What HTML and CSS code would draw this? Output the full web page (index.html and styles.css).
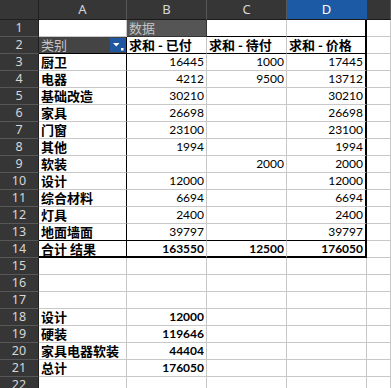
FILE: index.html
```html
<!doctype html>
<html lang="zh">
<head>
	<meta charset="UTF-8">
	<title>数据透视表</title>
	<link rel="stylesheet" href="styles.css">
</head>
<body>
	<div class="sheet">
		<!-- column headers -->
		<div class="corner"></div>
		<div class="ch">A</div>
		<div class="ch">B</div>
		<div class="ch">C</div>
		<div class="ch active">D</div>
		<div class="ch last"></div>

		<!-- 1 -->
		<div class="rh">1</div>
		<div class="c"></div>
		<div class="c field data">数据</div>
		<div class="c kb"></div>
		<div class="c kb kr"></div>
		<div class="c"></div>

		<!-- 2 -->
		<div class="rh">2</div>
		<div class="c field ka kb">
			<span>类别</span>
			<span class="drop">
				<svg width="16" height="14" viewBox="0 0 16 14"><path d="M3 5h6.5l-3.25 3.5z" fill="#fff"/><rect x="11" y="10" width="2.5" height="2.5" fill="#fff"/></svg>
			</span>
		</div>
		<div class="c hd kb">求和 - 已付</div>
		<div class="c hd kb">求和 - 待付</div>
		<div class="c hd kb kr">求和 - 价格</div>
		<div class="c"></div>

		<!-- 3 -->
		<div class="rh">3</div>
		<div class="c lbl ka">厨卫</div>
		<div class="c num">16445</div>
		<div class="c num">1000</div>
		<div class="c num kr">17445</div>
		<div class="c"></div>

		<div class="rh">4</div>
		<div class="c lbl ka">电器</div>
		<div class="c num">4212</div>
		<div class="c num">9500</div>
		<div class="c num kr">13712</div>
		<div class="c"></div>

		<div class="rh">5</div>
		<div class="c lbl ka">基础改造</div>
		<div class="c num">30210</div>
		<div class="c num"></div>
		<div class="c num kr">30210</div>
		<div class="c"></div>

		<div class="rh">6</div>
		<div class="c lbl ka">家具</div>
		<div class="c num">26698</div>
		<div class="c num"></div>
		<div class="c num kr">26698</div>
		<div class="c"></div>

		<div class="rh">7</div>
		<div class="c lbl ka">门窗</div>
		<div class="c num">23100</div>
		<div class="c num"></div>
		<div class="c num kr">23100</div>
		<div class="c"></div>

		<div class="rh">8</div>
		<div class="c lbl ka">其他</div>
		<div class="c num">1994</div>
		<div class="c num"></div>
		<div class="c num kr">1994</div>
		<div class="c"></div>

		<div class="rh">9</div>
		<div class="c lbl ka">软装</div>
		<div class="c num"></div>
		<div class="c num">2000</div>
		<div class="c num kr">2000</div>
		<div class="c"></div>

		<div class="rh">10</div>
		<div class="c lbl ka">设计</div>
		<div class="c num">12000</div>
		<div class="c num"></div>
		<div class="c num kr">12000</div>
		<div class="c"></div>

		<div class="rh">11</div>
		<div class="c lbl ka">综合材料</div>
		<div class="c num">6694</div>
		<div class="c num"></div>
		<div class="c num kr">6694</div>
		<div class="c"></div>

		<div class="rh">12</div>
		<div class="c lbl ka">灯具</div>
		<div class="c num">2400</div>
		<div class="c num"></div>
		<div class="c num kr">2400</div>
		<div class="c"></div>

		<div class="rh">13</div>
		<div class="c lbl ka kb">地面墙面</div>
		<div class="c num kb">39797</div>
		<div class="c num kb"></div>
		<div class="c num kb kr">39797</div>
		<div class="c"></div>

		<!-- total -->
		<div class="rh">14</div>
		<div class="c lbl ka kbb">合计 结果</div>
		<div class="c num b kbb">163550</div>
		<div class="c num b kbb">12500</div>
		<div class="c num b kbb kr">176050</div>
		<div class="c"></div>

		<div class="rh">15</div>
		<div class="c"></div><div class="c"></div><div class="c"></div><div class="c"></div><div class="c"></div>
		<div class="rh">16</div>
		<div class="c"></div><div class="c"></div><div class="c"></div><div class="c"></div><div class="c"></div>
		<div class="rh">17</div>
		<div class="c"></div><div class="c"></div><div class="c"></div><div class="c"></div><div class="c"></div>

		<!-- summary -->
		<div class="rh">18</div>
		<div class="c lbl">设计</div>
		<div class="c num b">12000</div>
		<div class="c"></div><div class="c"></div><div class="c"></div>

		<div class="rh">19</div>
		<div class="c lbl">硬装</div>
		<div class="c num b">119646</div>
		<div class="c"></div><div class="c"></div><div class="c"></div>

		<div class="rh">20</div>
		<div class="c lbl">家具电器软装</div>
		<div class="c num b">44404</div>
		<div class="c"></div><div class="c"></div><div class="c"></div>

		<div class="rh">21</div>
		<div class="c lbl">总计</div>
		<div class="c num b">176050</div>
		<div class="c"></div><div class="c"></div><div class="c"></div>

		<div class="rh">22</div>
		<div class="c"></div><div class="c"></div><div class="c"></div><div class="c"></div><div class="c"></div>
	</div>
</body>
</html>
```

FILE: styles.css
```css
*{
	margin: 0;
	padding: 0;
	box-sizing: border-box;
}
body{
	width: 391px;
	height: 388px;
	overflow: hidden;
	background: #fff;
	font-family: "Lato", "Noto Sans CJK SC", sans-serif;
}
.sheet{
	display: grid;
	width: 391px;
	grid-template-columns: 39px 88px 80px 80px 80px 1fr;
	grid-template-rows: 20px;
	grid-auto-rows: 17px;
}
/* headers */
.corner, .ch, .rh{
	background-color: #363636;
	color: #d6d6d6;
	font-family: "Noto Sans", sans-serif;
	font-size: 12.5px;
	text-align: center;
	border-right: 1px solid #575757;
	border-bottom: 1px solid #575757;
}
.corner{
	border-right-color: #202020;
	border-bottom-color: #202020;
}
.ch{
	line-height: 19px;
	font-size: 13px;
	border-bottom-color: #1b1b1b;
}
.ch.active{
	background-color: #1c5aa6;
	color: #fff;
	border-right-color: #1c5aa6;
}
.rh{
	line-height: 16px;
	border-right-color: #202020;
}
/* cells */
.c{
	border-right: 1px solid #c8c8c8;
	border-bottom: 1px solid #c8c8c8;
	font-size: 13px;
	line-height: 16px;
	white-space: nowrap;
	padding: 0 2px;
	color: #000;
}
.lbl{
	font-weight: bold;
	font-family: "Noto Sans CJK SC", sans-serif;
}
.hd{
	font-weight: bold;
	font-family: "Noto Sans CJK SC", sans-serif;
}
.num{
	text-align: right;
	font-size: 12px;
}
.b{
	font-weight: bold;
}
.field{
	background-color: #444;
	color: #c4c4c4;
	font-family: "Noto Sans CJK SC", sans-serif;
	border-color: #333;
}
.field.data{
	background-color: #555;
}
.field.ka{
	display: flex;
	justify-content: space-between;
	padding-right: 0;
	border-right-color: #000;
	border-bottom-color: #000;
}
.drop{
	display: block;
	width: 16px;
	height: 14px;
	margin-top: 1px;
	background-color: #1f57a0;
}
.drop svg{
	display: block;
}
/* pivot frame */
.ka{
	border-right-color: #000;
}
.kb{
	border-bottom-color: #000;
}
.kbb{
	border-bottom: 2px solid #000;
}
.kr{
	border-right: 2px solid #000;
}
```
